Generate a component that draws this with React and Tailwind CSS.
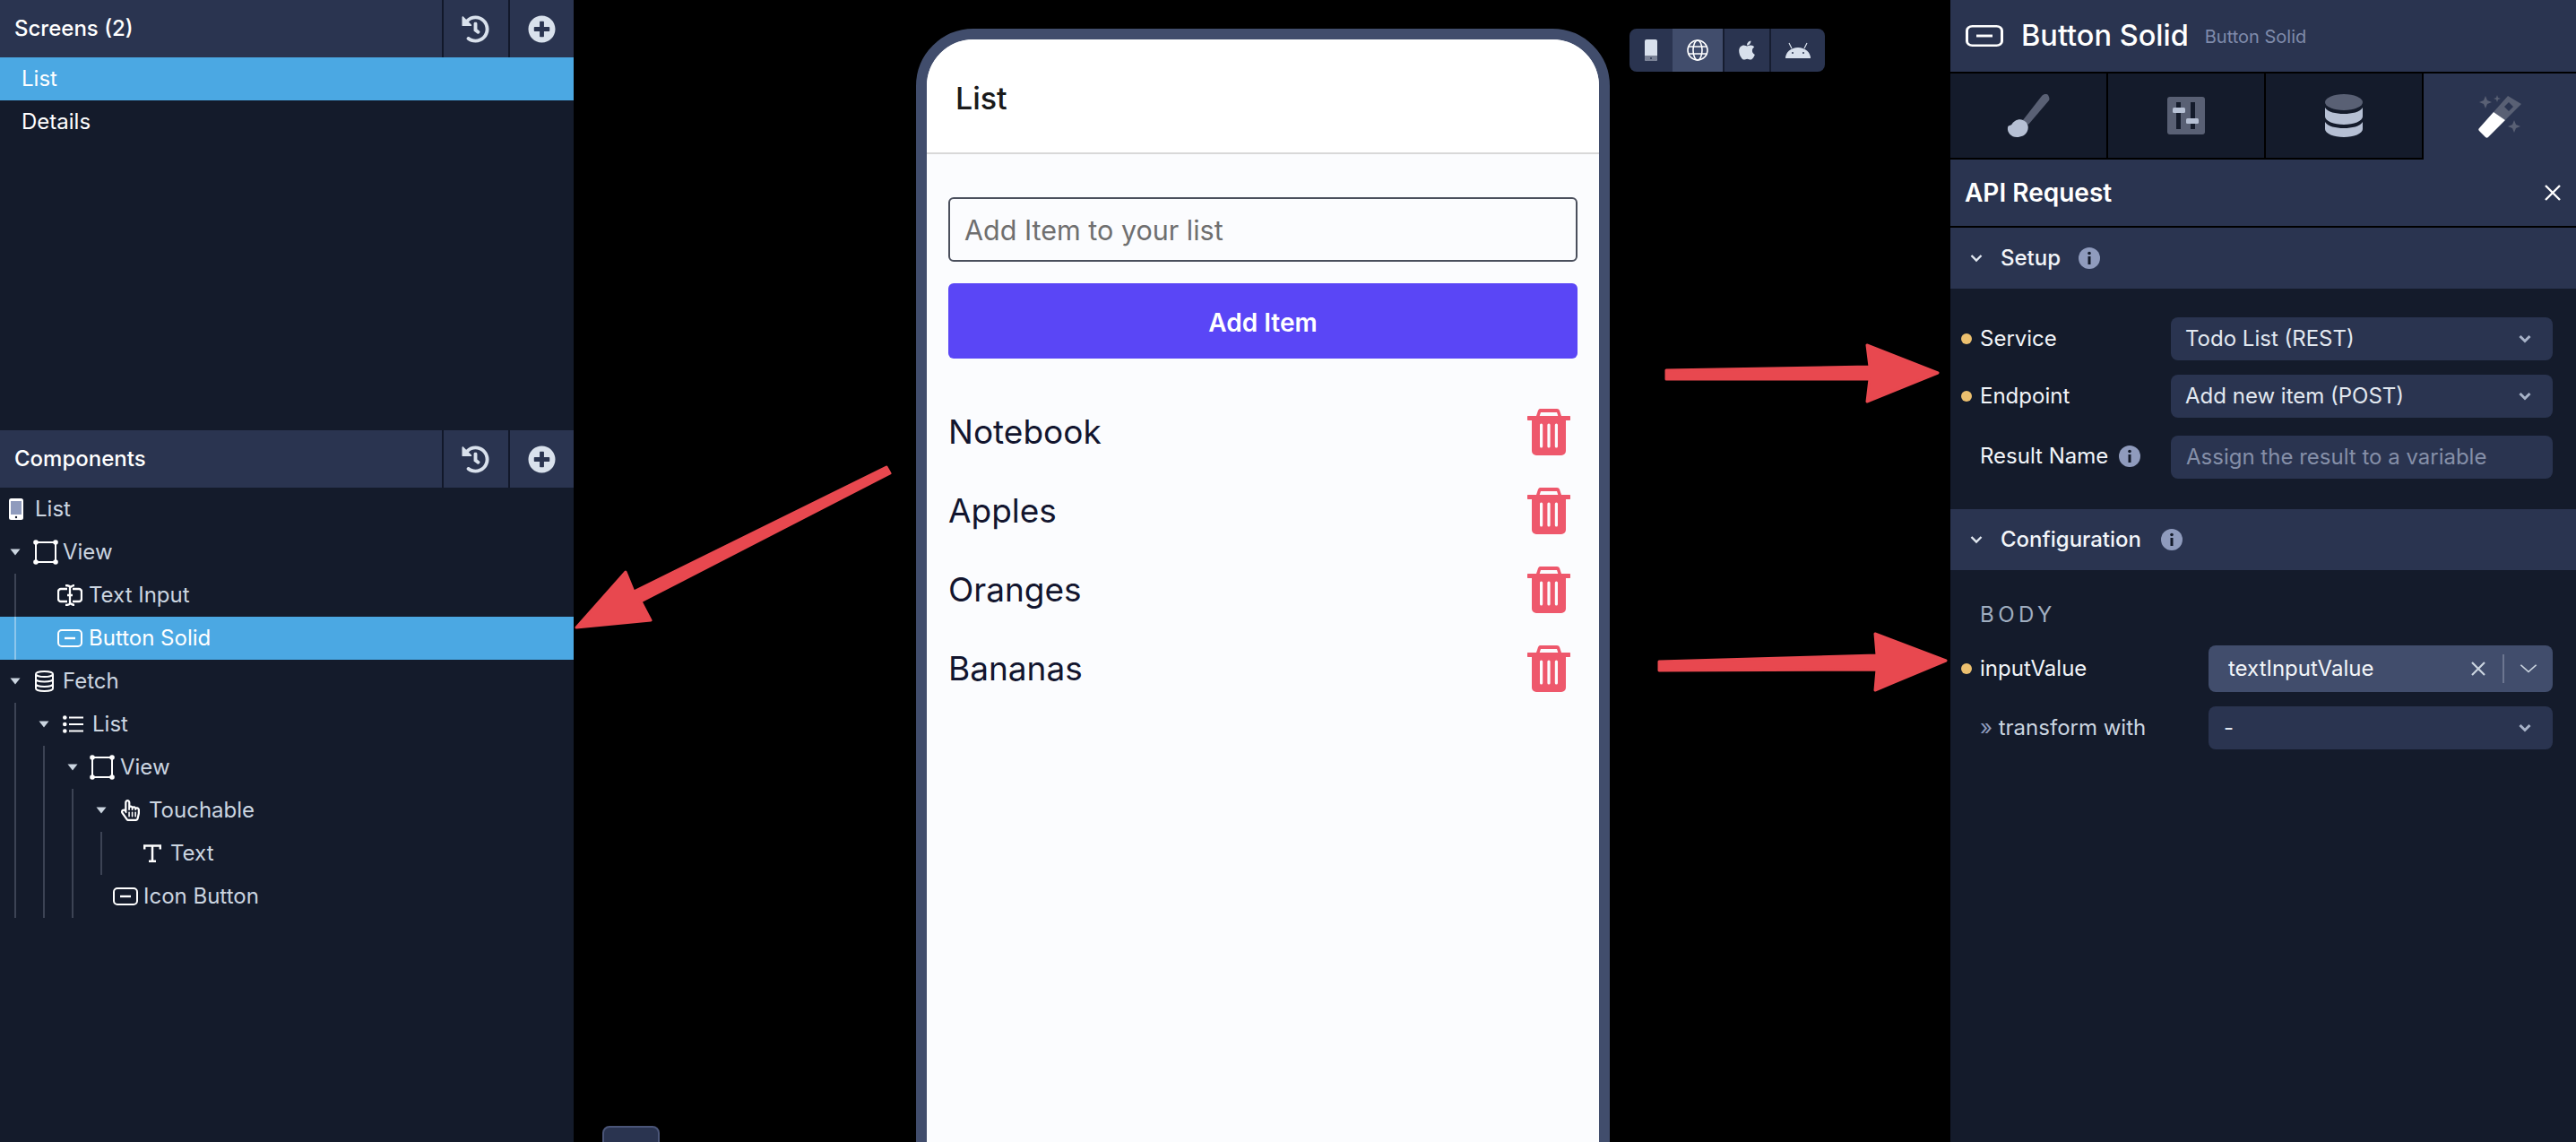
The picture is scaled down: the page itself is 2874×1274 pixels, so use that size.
import React from "react";
import { FaHistory, FaPlusCircle, FaApple, FaRegHandPointer } from "react-icons/fa";

const PhoneIcon = () => (
  <svg width="16" height="24" viewBox="0 0 16 24"><rect width="16" height="24" rx="2.5" fill="#fff" /><rect x="2" y="3" width="12" height="15" fill="#8f9bbd" /><circle cx="8" cy="21" r="1.2" fill="#141b2b" /></svg>
);
const ViewIcon = () => (
  <svg width="28" height="28" viewBox="0 0 28 28" fill="none" stroke="#fff" strokeWidth="2"><rect x="3" y="3" width="22" height="22" /><g fill="#fff" stroke="none"><circle cx="3" cy="3" r="2.8" /><circle cx="25" cy="3" r="2.8" /><circle cx="3" cy="25" r="2.8" /><circle cx="25" cy="25" r="2.8" /></g></svg>
);
const InputIcon = () => (
  <svg width="28" height="24" viewBox="0 0 28 24" fill="none" stroke="#fff" strokeWidth="2.300"><path d="M11 5H4a3 3 0 0 0-3 3v8a3 3 0 0 0 3 3h7M17 5h7a3 3 0 0 1 3 3v8a3 3 0 0 1-3 3h-7" /><path d="M14 2v20M9 1c3 0 5 1 5 2s2-2 5-2M9 23c3 0 5-1 5-2s2 2 5 2M11 12h6" /></svg>
);
const ButtonIcon = ({ w = 28, h = 20 }) => (
  <svg width={w} height={h} viewBox="0 0 28 20" preserveAspectRatio="none" fill="none" stroke="#fff" strokeWidth="2"><rect x="1" y="1" width="26" height="18" rx="4" /><path d="M8 10h12" strokeWidth="2.4" /></svg>
);
const DbIcon = () => (
  <svg width="21" height="24" viewBox="0 0 21 24" fill="none" stroke="#fff" strokeWidth="2"><ellipse cx="10.5" cy="4" rx="9.5" ry="3" /><path d="M1 4v16c0 1.7 4.2 3 9.5 3s9.5-1.300 9.500-3V4M1 9.500c0 1.700 4.200 3 9.500 3s9.500-1.300 9.500-3M1 15c0 1.700 4.200 3 9.500 3s9.500-1.300 9.500-3" /></svg>
);
const ListIcon = () => (
  <svg width="23" height="20" viewBox="0 0 23 20" fill="#fff"><circle cx="2.300" cy="2.500" r="2.300" /><circle cx="2.300" cy="10" r="2.300" /><circle cx="2.300" cy="17.500" r="2.300" /><rect x="7" y="1.500" width="16" height="2" /><rect x="7" y="9" width="16" height="2" /><rect x="7" y="16.500" width="16" height="2" /></svg>
);
const HandIcon = () => <FaRegHandPointer size={24} color="#fff" />;
const TIcon = () => (
  <svg width="20" height="20" viewBox="0 0 20 20" fill="none" stroke="#fff" strokeWidth="2.500"><path d="M1.200 5.500V1.500h17.600v4M10 1.500V19M6 18.800h8" /></svg>
);
const Caret = () => (
  <svg width="12" height="8" viewBox="0 0 12 8"><path d="M0.500 0.500h11L6 7.500z" fill="#cbd5e0" /></svg>
);
const Chevron = ({ color = "#a8b3c9", w = 14, h = 10, sw = 3 }) => (
  <svg width={w} height={h} viewBox="0 0 14 10" preserveAspectRatio="none" fill="none" stroke={color} strokeWidth={sw}><path d="M1.500 2l5.500 5.500L12.500 2" /></svg>
);
const Info = () => (
  <svg width="24" height="24" viewBox="0 0 24 24"><circle cx="12" cy="12" r="12" fill="#8f9bbd" /><rect x="10.500" y="10" width="3" height="9" fill="#141b2b" /><circle cx="12" cy="6.500" r="1.800" fill="#141b2b" /></svg>
);
const Trash = () => (
  <svg width="48" height="52" viewBox="0 0 48 52"><path fill="#ee586c" d="M14 0h19c1.500 0 2.500.8 3 2l2 6h9a1.500 1.500 0 0 1 0 5H1a1.500 1.500 0 0 1 0-5h9l2-6c.5-1.200 1.500-2 2-2zM15 4l-1.300 4h20.600L33 4z" fillRule="evenodd" /><path fill="#ee586c" fillRule="evenodd" d="M5 13h38v34a5 5 0 0 1-5 5H10a5 5 0 0 1-5-5zM14 18v24a1.300 1.300 0 0 0 3.200 0V18a1.300 1.300 0 0 0-3.200 0zM22.400 18v24a1.300 1.300 0 0 0 3.200 0V18a1.300 1.300 0 0 0-3.200 0zM30.800 18v24a1.300 1.300 0 0 0 3.200 0V18a1.300 1.300 0 0 0-3.200 0z" /></svg>
);

const tree = [
  { t: "List", icon: <PhoneIcon />, iconX: 10, iconW: 16, textX: 39, guides: [] },
  { t: "View", chev: 11, icon: <ViewIcon />, iconX: 37, iconW: 28, textX: 70, guides: [] },
  { t: "Text Input", icon: <InputIcon />, iconX: 64, iconW: 28, textX: 99, guides: [16] },
  { t: "Button Solid", icon: <ButtonIcon />, iconX: 64, iconW: 28, textX: 99, guides: [16], active: true },
  { t: "Fetch", chev: 11, icon: <DbIcon />, iconX: 39, iconW: 21, textX: 70, guides: [] },
  { t: "List", chev: 43, icon: <ListIcon />, iconX: 70, iconW: 23, textX: 103, guides: [16] },
  { t: "View", chev: 75, icon: <ViewIcon />, iconX: 100, iconW: 28, textX: 134, guides: [16, 48] },
  { t: "Touchable", chev: 107, icon: <HandIcon />, iconX: 135, iconW: 21, textX: 166, guides: [16, 48, 80] },
  { t: "Text", icon: <TIcon />, iconX: 160, iconW: 20, textX: 190, guides: [16, 48, 80, 112] },
  { t: "Icon Button", icon: <ButtonIcon />, iconX: 126, iconW: 28, textX: 160, guides: [16, 48, 80] },
];

function TreeRow({ r }) {
  const start = r.chev ?? r.iconX;
  const iconMl = r.chev !== undefined ? r.iconX - r.chev - 12 : 0;
  return (
    <div className={`relative flex h-12 items-center ${r.active ? "bg-[#4ba8e3] text-white" : "text-[#cbd5e0]"}`} style={{ paddingLeft: start }}>
      {r.guides.map((g) => (
        <span key={g} className={`absolute inset-y-0 w-[2px] ${r.active ? "bg-[#8cc6ec]" : "bg-[#3c4354]"}`} style={{ left: g }} />
      ))}
      {r.chev !== undefined && <Caret />}
      <span className="flex shrink-0 justify-center" style={{ marginLeft: iconMl, width: r.iconW }}>{r.icon}</span>
      <span style={{ marginLeft: r.textX - r.iconX - r.iconW }}>{r.t}</span>
    </div>
  );
}

function PanelHeader({ title }) {
  return (
    <div className="flex h-16 shrink-0 items-center bg-[#2a3450]">
      <div className="flex-1 pl-4 font-medium text-white">{title}</div>
      <div className="flex h-16 w-[74px] items-center justify-center border-l-2 border-[#12182a] pr-[2px]"><FaHistory size={31} color="#d9e1ec" /></div>
      <div className="flex h-16 w-[73px] items-center justify-center border-l-2 border-[#12182a]"><FaPlusCircle size={31} color="#d9e1ec" /></div>
    </div>
  );
}

function Select({ text, w = "w-[426px]", pl = "pl-4" }) {
  return (
    <div className={`flex h-12 ${w} items-center justify-between rounded-lg bg-[#2a3450] ${pl} pr-6 text-[#e2e8f0]`}>
      <span>{text}</span>
      <Chevron />
    </div>
  );
}

const Dot = () => <span className="h-3 w-3 shrink-0 rounded-full bg-[#ecc06f]" />;

function SectionHead({ title, mlInfo }) {
  return (
    <div className="flex h-[68px] items-center bg-[#2a3450] pl-[22px]">
      <Chevron color="#e2e8f0" sw={2.400} />
      <span className="ml-5 font-medium text-[#f2f5f9]">{title}</span>
      <span className={mlInfo}><Info /></span>
    </div>
  );
}

function Arrows() {
  return (
    <svg className="pointer-events-none absolute inset-0" width="2874" height="1274" viewBox="0 0 2874 1274" fill="#e8484f" stroke="#e8484f" strokeLinejoin="round" strokeWidth="3">
      <path d="M989 521l4 7-278 143 11 21-83 8 55-62 9 22z" />
      <path d="M1859 413l227-4-3-24 79 31-79 32 3-25-227 0z" />
      <path d="M1851 738l243-7-2-24 79 30-79 33 2-23-243 1z" />
    </svg>
  );
}

function Toolbar() {
  return (
    <div className="flex h-12 w-[218px] shrink-0 items-stretch overflow-hidden rounded-lg bg-[#2a3450]">
      <div className="flex w-[48px] items-center justify-center">
        <svg width="14" height="24" viewBox="0 0 14 24"><rect width="14" height="24" rx="2" fill="#d8e0ec" /><path d="M0 18h14v4a2 2 0 0 1-2 2H2a2 2 0 0 1-2-2z" fill="#7a8296" /><circle cx="7" cy="21" r="1" fill="#2a3450" /></svg>
      </div>
      <div className="flex w-[56px] items-center justify-center bg-[#414d6c]">
        <svg width="24" height="24" viewBox="0 0 24 24" fill="none" stroke="#fff" strokeWidth="1.600"><circle cx="12" cy="12" r="11" /><ellipse cx="12" cy="12" rx="5" ry="11" /><path d="M2 8h20M2 16h20" /></svg>
      </div>
      <div className="flex w-[52px] items-center justify-center border-l-2 border-[#161d30]"><FaApple size={24} color="#d8e0ec" /></div>
      <div className="flex w-[62px] items-center justify-center border-l-2 border-[#161d30]">
        <svg width="28" height="18" viewBox="0 0 28 18"><path d="M0 17a14 12 0 0 1 28 0z" fill="#d8e0ec" transform="translate(0 1)" /><path d="M7 7L4 1M21 7l3-6" stroke="#d8e0ec" strokeWidth="1.200" /><circle cx="8" cy="12" r="1" fill="#2a3450" /><circle cx="20" cy="12" r="1" fill="#2a3450" /></svg>
      </div>
    </div>
  );
}

export default function App() {
  return (
    <div className="relative flex h-[1274px] w-[2874px] overflow-hidden bg-black text-2xl [font-family:Inter,sans-serif]">
      <aside className="flex w-[640px] shrink-0 flex-col bg-[#141b2b]">
        <div className="flex h-[480px] shrink-0 flex-col">
          <PanelHeader title="Screens (2)" />
          <div className="flex h-12 items-center bg-[#4ba8e3] pl-6 text-white">List</div>
          <div className="flex h-12 items-center pl-6 text-white">Details</div>
        </div>
        <PanelHeader title="Components" />
        {tree.map((r, i) => <TreeRow key={i} r={r} />)}
      </aside>

      <main className="relative flex flex-1 items-start gap-[22px] pl-[382px] pt-8">
        <div className="h-[1300px] w-[774px] shrink-0 rounded-t-[64px] border-[12px] border-[#414d6c] bg-[#fbfcfe]">
          <div className="flex h-[126px] items-center rounded-t-[52px] bg-white pl-8 pt-[6px] text-[34px] font-medium text-[#1a1a1a]">List</div>
          <div className="h-[2px] bg-[#d8d8d8]" />
          <div className="px-6 pt-12">
            <div className="flex h-[72px] items-center rounded-md border-2 border-[#4a4f5c] pl-4 pt-[2px] text-[30.5px] text-[#6f6f6f]">Add Item to your list</div>
            <div className="mt-6 flex h-[84px] items-center justify-center rounded-md bg-[#5a46f6] pt-[5px] text-[28px] font-semibold text-white">Add Item</div>
          </div>
          <div className="mt-[38px] pl-6 pr-8">
            {["Notebook", "Apples", "Oranges", "Bananas"].map((t) => (
              <div key={t} className="flex h-[88px] items-center justify-between text-[37px] text-[#12152e]">
                <span>{t}</span>
                <Trash />
              </div>
            ))}
          </div>
        </div>
        <Toolbar />
        <div className="absolute left-8 top-[1256px] h-[30px] w-16 rounded-lg border-2 border-[#4a5578] bg-[#2a3450]" />
      </main>

      <aside className="flex w-[698px] shrink-0 flex-col bg-[#141b2b]">
        <div className="flex h-20 shrink-0 items-center bg-[#2a3450] pl-[17px]">
          <ButtonIcon w={42} h={24} />
          <span className="ml-5 text-[32.5px] font-medium text-white">Button Solid</span>
          <span className="ml-[18px] pt-[2px] text-xl text-[#7f8bab]">Button Solid</span>
        </div>
        <div className="flex h-[98px] shrink-0 border-t-2 border-black">
          <div className="flex w-[176px] items-center justify-center border-b-[2px] border-r-2 border-black">
            <svg width="48" height="48" viewBox="0 0 48 48"><path d="M46 1c-2-2-5-1-7 1L18 29l6 5L47 7c1-2 0-4-1-6z" fill="#596074" /><path d="M1 37c1-3 3-1 5-4 2-3 7-6 12-4 5 2 7 7 5 12-2 5-7 7-12 7C5 48 0 43 1 37z" fill="#b6c0d4" /></svg>
          </div>
          <div className="flex w-[176px] items-center justify-center border-b-[2px] border-r-2 border-black">
            <svg width="42" height="42" viewBox="0 0 42 42"><rect width="42" height="42" rx="3" fill="#596074" /><rect x="10" y="6" width="5" height="30" fill="#141b2b" /><rect x="26" y="6" width="5" height="30" fill="#141b2b" /><rect x="6" y="12" width="14" height="6" rx="1.500" fill="#b6c0d4" /><rect x="21" y="24" width="14" height="6" rx="1.500" fill="#b6c0d4" /></svg>
          </div>
          <div className="flex w-[176px] items-center justify-center border-b-[2px] border-r-2 border-black">
            <svg width="42" height="48" viewBox="0 0 42 48"><ellipse cx="21" cy="9" rx="21" ry="9" fill="#596074" /><path d="M0 15c3 5 12 7 21 7s18-2 21-7v10c0 5-10 9-21 9S0 30 0 25z" fill="#b6c0d4" /><path d="M0 31c3 5 12 7 21 7s18-2 21-7v8c0 5-10 9-21 9S0 44 0 39z" fill="#b6c0d4" /></svg>
          </div>
          <div className="flex flex-1 items-center justify-center bg-[#2a3450]">
            <svg width="48" height="48" viewBox="0 0 48 48"><path fillRule="evenodd" d="M33 1l15 9-18 18-13-9zM34 8l-5 5 5 5 5-5z" fill="#596074" /><path d="M17 19l13 9-19 19c-1 1-2 1-3 0l-7-7c-1-1-1-2 0-3z" fill="#fff" /><path d="M8 1l2 5 5 2-5 2-2 5-2-5-5-2 5-2zM21 0l1 3 3 1-3 1-1 3-1-3-3-1 3-1zM40 28l2 5 5 2-5 2-2 5-2-5-5-2 5-2z" fill="#596074" /></svg>
          </div>
        </div>
        <div className="flex h-[74px] shrink-0 items-center justify-between bg-[#2a3450] pl-4 pr-4">
          <span className="pt-[2px] text-[28px] font-semibold text-white">API Request</span>
          <svg width="20" height="20" viewBox="0 0 20 20" stroke="#fff" strokeWidth="2.400"><path d="M2 2l16 16M18 2L2 18" /></svg>
        </div>
        <div className="h-[2px] shrink-0 bg-black" />
        <SectionHead title="Setup" mlInfo="ml-[20px]" />
        <div className="flex h-[246px] shrink-0 flex-col pl-3 pr-[26px] pt-8">
          <div className="flex h-12 items-center justify-between">
            <div className="flex items-center gap-[9px] text-[#f2f5f9]"><Dot />Service</div>
            <Select text="Todo List (REST)" />
          </div>
          <div className="mt-4 flex h-12 items-center justify-between">
            <div className="flex items-center gap-[9px] text-[#f2f5f9]"><Dot />Endpoint</div>
            <Select text="Add new item (POST)" />
          </div>
          <div className="mt-5 flex h-12 items-center justify-between">
            <div className="flex items-center gap-3 pb-[3px] pl-[21px] text-[#f2f5f9]">Result Name<Info /></div>
            <div className="flex h-12 w-[426px] items-center rounded-lg bg-[#2a3450] pl-[17px] text-[#858fa8]">Assign the result to a variable</div>
          </div>
        </div>
        <SectionHead title="Configuration" mlInfo="ml-[22px]" />
        <div className="flex flex-col pl-3 pr-[26px]">
          <div className="mt-[36px] pl-[21px] leading-7 tracking-[4.500px] text-[#a0aec0]">BODY</div>
          <div className="mt-5 flex h-[52px] items-center justify-between">
            <div className="flex items-center gap-[9px] text-[#f2f5f9]"><Dot />inputValue</div>
            <div className="flex h-[52px] w-[384px] items-center rounded-lg bg-[#414d6c] pl-[22px] text-[#f2f5f9]">
              <span className="flex-1">textInputValue</span>
              <svg width="16" height="16" viewBox="0 0 16 16" stroke="#cbd5e0" strokeWidth="2.200"><path d="M1 1l14 14M15 1L1 15" /></svg>
              <span className="ml-[19px] h-8 w-[2px] bg-[#6c7690]" />
              <span className="ml-4 mr-4 flex"><Chevron w={22} h={14} sw={1.100} color="#cbd5e0" /></span>
            </div>
          </div>
          <div className="mt-4 flex h-12 items-center justify-between">
            <div className="pl-[21px] text-[#cbd5e0]"><span className="text-[#8f9bbd]">»</span> transform with</div>
            <Select text="-" w="w-[384px]" pl="pl-[17px]" />
          </div>
        </div>
      </aside>
      <Arrows />
    </div>
  );
}
